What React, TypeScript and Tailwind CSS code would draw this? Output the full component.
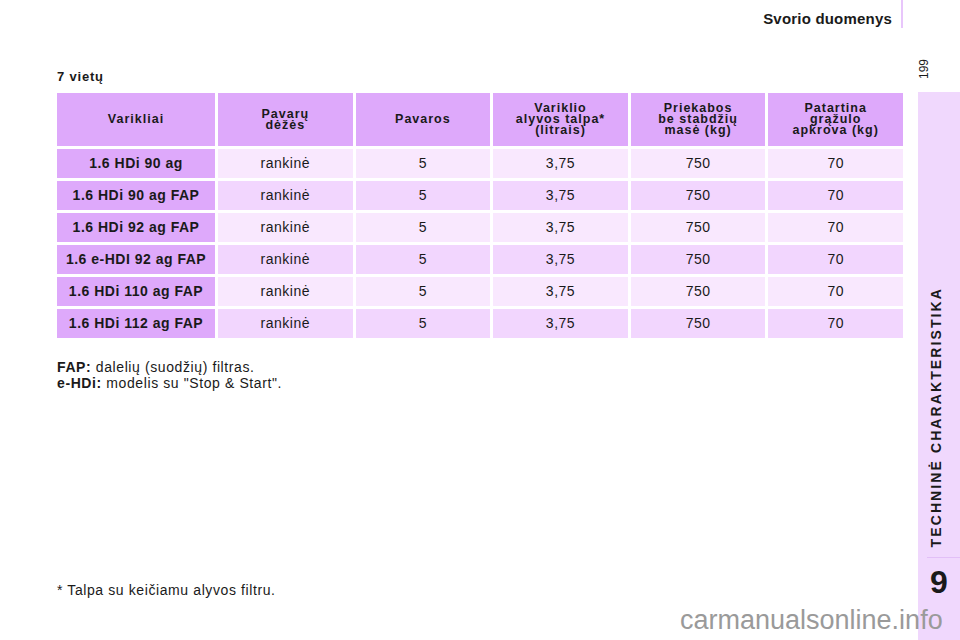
const headers = [
  ["Varikliai"],
  ["Pavarų", "dėžės"],
  ["Pavaros"],
  ["Variklio", "alyvos talpa*", "(litrais)"],
  ["Priekabos", "be stabdžių", "masė (kg)"],
  ["Patartina", "grąžulo", "apkrova (kg)"],
];

const engines = [
  "1.6 HDi 90 ag",
  "1.6 HDi 90 ag FAP",
  "1.6 HDi 92 ag FAP",
  "1.6 e-HDI 92 ag FAP",
  "1.6 HDi 110 ag FAP",
  "1.6 HDi 112 ag FAP",
];

export default function App() {
  return (
    <div className="relative flex w-[960px] h-[640px] bg-white font-['Liberation_Sans',Arial,sans-serif] text-[#1a1a1a] overflow-hidden">
      <div className="flex-1 flex flex-col pl-[57px] pr-[15px]">
        <div className="h-[28px] flex justify-end items-end">
          <span className="text-[15px] font-bold leading-[16px] tracking-[0.2px] mb-[1px] mr-[9px]">Svorio duomenys</span>
          <div className="w-[2px] h-[28px] bg-[#e8c6fb]" />
        </div>

        <p className="mt-[41px] text-[13px] font-bold leading-[16px] tracking-[0.8px]">7 vietų</p>

        <div className="mt-[8px] grid grid-cols-[158px_repeat(5,1fr)] gap-[3px]">
          {headers.map((lines, i) => (
            <div key={i} className="h-[53px] bg-[#dea9fb] flex flex-col items-center justify-center text-[12.5px] font-bold leading-[11px] tracking-[1px] text-center">
              {lines.map((l) => (
                <span key={l}>{l}</span>
              ))}
            </div>
          ))}
          {engines.map((e, r) => {
            const bg = r % 2 === 0 ? "bg-[#f9e8fe]" : "bg-[#f2d6fe]";
            return [
              <div key={e} className="h-[29px] bg-[#dea9fb] flex items-center justify-center text-[14px] font-bold tracking-[0.5px]">
                {e}
              </div>,
              ...["rankinė", "5", "3,75", "750", "70"].map((v, c) => (
                <div key={e + c} className={`h-[29px] ${bg} flex items-center justify-center text-[14px] tracking-[0.5px]`}>
                  {v}
                </div>
              )),
            ];
          })}
        </div>

        <div className="mt-[21px] text-[14px] leading-[16px] tracking-[0.6px]">
          <p>
            <span className="font-bold">FAP:</span> dalelių (suodžių) filtras.
          </p>
          <p>
            <span className="font-bold">e-HDi:</span> modelis su "Stop &amp; Start".
          </p>
        </div>

        <p className="mt-auto mb-[42px] text-[14px] leading-[16px] tracking-[0.6px]">* Talpa su keičiamu alyvos filtru.</p>
      </div>

      <div className="w-[42px] flex flex-col">
        <div className="h-[92px] flex items-start pt-[59px]">
          <span className="[writing-mode:vertical-rl] rotate-180 text-[12px] leading-[12px]">199</span>
        </div>
        <div className="flex-1 bg-[#f0d8fd] flex flex-col items-center">
          <div className="flex-1" />
          <span className="[writing-mode:vertical-rl] rotate-180 text-[14px] font-bold leading-[16px] tracking-[2.1px] -ml-[6px]">
            TECHNINĖ CHARAKTERISTIKA
          </span>
          <div className="mt-[10px] ml-[9px] self-stretch h-[1px] bg-[#e2bff7]" />
          <span className="mt-[6px] text-[32px] font-bold leading-[36px] mb-[40px]">9</span>
        </div>
      </div>

      <span className="absolute left-[680px] top-[605px] text-[27px] leading-[30px] text-[#9a9a9a]">carmanualsonline.info</span>
    </div>
  );
}
